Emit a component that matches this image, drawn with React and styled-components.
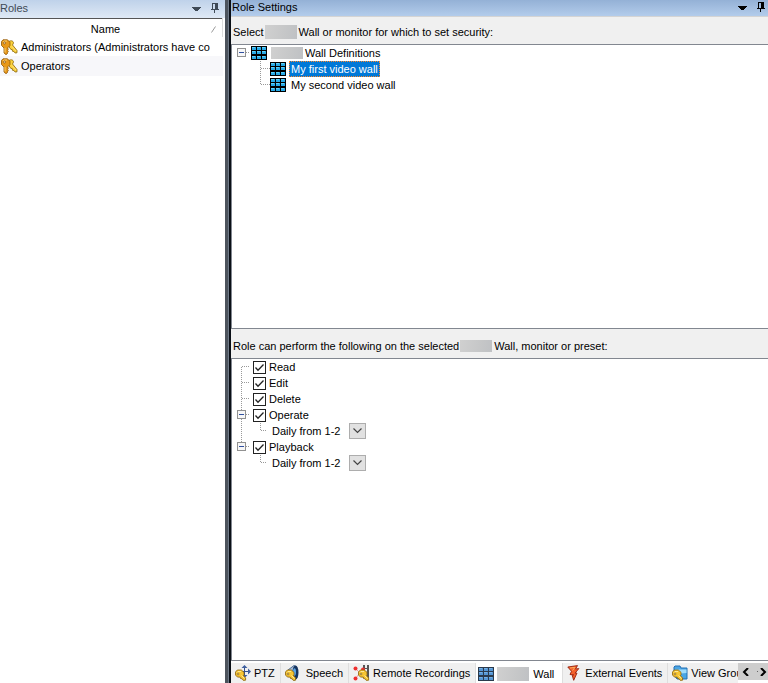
import React from 'react';
import styled, { createGlobalStyle, css } from 'styled-components';

const GlobalStyle = createGlobalStyle`
  * {
    box-sizing: border-box;
  }

  body {
    margin: 0;
    background: #f0f0f0;
    color: #000;
    font: 11px/16px 'Liberation Sans', Arial, sans-serif;
  }

  button {
    padding: 0;
    border: 0;
    background: none;
    font: inherit;
    color: inherit;
  }
`;

const Window = styled.div`
  display: flex;
  height: 100vh;
  overflow: hidden;
`;

const Splitter = styled.div`
  flex: none;
  width: 6px;
  background: linear-gradient(90deg, #4c535c 3px, #6f7a88 3px 4px, #0a0f16 4px);
`;

const RolesPane = styled.aside`
  flex: none;
  width: 225px;
  display: flex;
  flex-direction: column;
  background: #fff;
`;

const SettingsPane = styled.main`
  flex: 1;
  min-width: 0;
  display: flex;
  flex-direction: column;
`;

const TitleBar = styled.header`
  flex: none;
  display: flex;
  align-items: center;
  gap: 10px;
  height: ${({ $active }) => ($active ? 16 : 18)}px;
  padding: ${({ $active }) => ($active ? '0 3px 2px 1px' : '0 6px 3px 0')};
  color: ${({ $active }) => ($active ? '#000' : '#3f4a56')};
  background: ${({ $active }) => ($active
    ? 'linear-gradient(#94b1d6, #b3cceb)'
    : 'linear-gradient(#bfd2ea, #dfe9f5)')};
`;

const Title = styled.h1`
  flex: 1;
  margin: 0;
  font-size: 11px;
  font-weight: normal;
`;

const IconButton = styled.button`
  display: flex;
`;

const RoleTable = styled.table`
  width: 223px;
  border-top: 1px solid #555;
  border-collapse: collapse;
  table-layout: fixed;
`;

const NameHeader = styled.th`
  height: 18px;
  padding: 2px 6px 0 0;
  border-right: 1px solid #dcdcdc;
  font-weight: normal;

  div {
    display: flex;
    align-items: center;
  }

  span {
    flex: 1;
    text-align: center;
  }
`;

const RoleCell = styled.td`
  height: ${({ $odd }) => ($odd ? 20 : 19)}px;
  padding: 0;
  background: ${({ $odd }) => ($odd ? '#f7f7fa' : '#fff')};

  div {
    display: flex;
    align-items: center;
    gap: 3px;
    overflow: hidden;
    white-space: nowrap;
  }

  svg {
    flex: none;
  }
`;

const Prompt = styled.p`
  flex: none;
  display: flex;
  align-items: center;
  height: ${({ $first }) => ($first ? 28 : 29)}px;
  margin: 0;
  padding: ${({ $first }) => ($first ? 3 : 5)}px 0 0 2px;
  border-top: ${({ $first }) => ($first ? '1px solid #d4d4d4' : '0')};
  white-space: nowrap;
`;

const Redacted = styled.span`
  display: inline-block;
  flex: none;
  width: 32px;
  height: ${({ $height }) => $height || 14}px;
  margin: 0 2px 0 1px;
  background: linear-gradient(100deg, #d0d0d0, #c6c7c8 60%, #bfc1c4);
`;

const TreeBox = styled.section`
  flex: ${({ $grow }) => $grow} 1 0;
  min-height: 0;
  overflow: hidden;
  border: 1px solid #828790;
  border-right: 0;
  background: #fff;
`;

const TreeList = styled.ul`
  margin: 0;
  padding: 0 0 0 4px;
  list-style: none;
`;

const TreeRow = styled.li`
  display: flex;
  align-items: center;
  height: 16px;
  white-space: nowrap;

  > svg {
    flex: none;
  }
`;

const NodeLabel = styled.span`
  display: flex;
  align-items: center;
  height: 16px;
  margin-left: 3px;
  padding: 0 2px;

  ${({ $redacted }) => $redacted && css`
    padding: 0;
  `}

  ${({ $selected }) => $selected && css`
    padding: 0 1px;
    border: 1px dotted #ff8728;
    background: #0078d7;
    color: #fff;
  `}
`;

const CheckLabel = styled.label`
  display: flex;
  align-items: center;
  gap: 3px;
`;

const Checkbox = styled.input`
  appearance: none;
  width: 13px;
  height: 13px;
  margin: 1px 0 0;
  border: 1px solid #222;
  background: #fff;

  &:checked {
    background: #fff url("data:image/svg+xml,%3Csvg xmlns='http://www.w3.org/2000/svg' viewBox='0 0 11 11'%3E%3Cpath d='M1.5 5.5l2.5 2.7 5.5-5.7' fill='none' stroke='%23222' stroke-width='1.3'/%3E%3C/svg%3E");
  }
`;

const TimeButton = styled.button`
  display: flex;
  align-items: center;
  justify-content: center;
  width: 17px;
  height: 16px;
  margin-left: 7px;
  border: 1px solid #adadad;
  background: #e1e1e1;
`;

const TabBar = styled.nav`
  flex: none;
  display: flex;
  height: 22px;
  padding-top: 2px;
  background: #fff;
`;

const TabStrip = styled.div`
  flex: 1;
  min-width: 0;
  display: flex;
  overflow: hidden;
`;

const Tab = styled.button`
  flex: none;
  display: flex;
  align-items: center;
  gap: ${({ $gap }) => $gap || 3}px;
  padding: ${({ $active }) => ($active ? '2px 8px 0 2px' : '0 5px 0 4px')};
  border-right: 1px solid #dedede;
  background: ${({ $active }) => ($active ? '#fff' : '#f0f0f0')};
  white-space: nowrap;
`;

const Scroller = styled.div`
  flex: none;
  display: flex;
  align-items: center;
  justify-content: space-between;
  width: 30px;
  height: 17px;
  padding: 1px 1px 0 4px;
  background: #cdcdcd;
`;

const Arrow = () => (
  <svg width="9" height="6" viewBox="0 -2 9 6" shapeRendering="crispEdges">
    <path d="M0 0h9v1h-1v1h-1v1h-1v1H3V3H2V2H1V1H0z" fill="currentColor" />
  </svg>
);

const Pin = () => (
  <svg width="8" height="10" viewBox="0 0 8 10" shapeRendering="crispEdges">
    <path d="M1 0h6v6h1v1H4v3H3V7H0V6h1zM2 1v5h2V1z" fill="currentColor" fillRule="evenodd" />
  </svg>
);

const KeysIcon = () => (
  <svg width="18" height="16" viewBox="-1 0 18 16">
    <g strokeWidth=".8" strokeLinejoin="round">
      <path d="M8 2.500c2-1.500 4.500-.5 4.500 1.500L11.500 6l4.500 5.500v2.300l-2 .2-1-1.500-1.500-.2-.2-1.600-1.500-.3L7.500 7z" fill="#fbd23c" stroke="#8a6508" />
      <path d="M2 .8h4.500L9 3.500v3L7 8.700 6.500 9l.8 1.200-.8 1.100.8 1.200-.8 1.200v.8L5 15.700 3 14V9L.5 6.500v-4z" fill="#e8981a" stroke="#8f5605" />
      <path d="M2 3l1.500-1H6M4 9v4.500M11 7.500l4 4.500" fill="none" stroke="#ffe08a" />
      <circle cx="3.500" cy="4" r="1" fill="#fff" stroke="#8f5605" />
    </g>
  </svg>
);

const SmallKey = () => (
  <g stroke="#8a5f08" strokeWidth=".8" strokeLinejoin="round">
    <path d="M2.300 5h4L9 7.300v2.500l-.6 1 2.200 2v2.400l-2.300.2-1.200-1.600-1.600-.3-.3-1.400H2.500L.5 10V7z" fill="#f6c533" />
    <path d="M2 7.500l1-1h3M6.500 10.500l3 3" fill="none" stroke="#fff0b0" />
    <circle cx="3" cy="9" r=".9" fill="#fff" />
  </g>
);

const GridIcon = ({ muted }) => (
  <svg width="16" height="14" viewBox="0 0 16 14" shapeRendering="crispEdges">
    <rect width="16" height="14" fill={muted ? '#2b3a4c' : '#000'} />
    {[1, 5, 10].map((y) => [1, 6, 11].map((x) => (
      <g key={`${x}-${y}`}>
        <rect x={x} y={y} width="4" height="3" fill={muted ? '#5596d4' : '#27a9e6'} />
        <rect x={x} y={y} width="3" height="1" fill={muted ? '#76b1e6' : '#5fd0fa'} />
      </g>
    )))}
  </svg>
);

const PtzIcon = () => (
  <svg width="16" height="16" viewBox="0 0 16 16">
    <path d="M9.500 1v12M4 6.500h11" fill="none" stroke="#31508f" />
    <path d="M9.500 0l3 3h-6zM9.500 13l3-3h-6zM16 6.500l-3-3v6z" fill="#3e5f9f" />
    <SmallKey />
  </svg>
);

const SpeechIcon = () => (
  <svg width="16" height="16" viewBox="0 0 16 16">
    <path d="M3 5l6-4.500c4-.5 5 14.500 0 14.500L4 11z" fill="#a9bdd5" stroke="#4c6c94" />
    <ellipse cx="10.500" cy="7.500" rx="3" ry="7" fill="#15335f" />
    <ellipse cx="9.500" cy="7" rx="1.500" ry="3.800" fill="#5ba7e8" />
    <SmallKey />
  </svg>
);

const RecordingsIcon = () => (
  <svg width="17" height="16" viewBox="0 0 17 16">
    <path d="M10 0h6v13h-6z" fill="#555" />
    <path d="M12 0h2v3h-2zM12 4h2v4h-2zM12 9h2v3h-2z" fill="#eee" />
    <path d="M2 3l5 5-5 6" fill="none" stroke="#f09a9a" />
    <g fill="#ee3030">
      <circle cx="2.500" cy="3.500" r="2" />
      <circle cx="2.500" cy="13.500" r="2" />
      <circle cx="10" cy="4.500" r="2" />
    </g>
    <g transform="translate(5)"><SmallKey /></g>
  </svg>
);

const BoltIcon = () => (
  <svg width="13" height="16" viewBox="0 0 13 16">
    <path d="M.8 2L10.500.600 8.500 4l3.300-.4L8 8.200l2-.2-3.300 7.300-1.500-5 1.500-.4-3.700-.4 1.500-3.200z" fill="#f4602c" stroke="#961f0c" strokeWidth=".9" />
    <path d="M3 3l5-.7-2.500 3.300" fill="none" stroke="#ffad5a" />
  </svg>
);

const ViewIcon = () => (
  <svg width="16" height="16" viewBox="0 0 16 16">
    <path d="M2 2l1-1h5l1 2h6v11H5L2 10z" fill="#4aa5e4" stroke="#2271b5" />
    <path d="M3 4.500h11.500V8L3 9z" fill="#9fdcfb" />
    <SmallKey />
  </svg>
);

// Expander and dotted connector to the left of a tree node
const Branch = ({ expander, last, first, width = 17 }) => (
  <svg width={width} height="16" viewBox={`0 0 ${width} 16`} shapeRendering="crispEdges">
    {!first && <path d="M5.500 0v8" stroke="#999" strokeDasharray="1 1" />}
    {!last && <path d="M5.500 8v8" stroke="#999" strokeDasharray="1 1" />}
    <path d="M6 7.500h8" stroke="#999" strokeDasharray="1 1" />
    {expander && (
      <>
        <rect x="1.500" y="3.500" width="8" height="8" rx="1" fill="#f7f7f7" stroke="#919191" />
        <path d="M3 7.500h5" stroke="#3050a0" />
      </>
    )}
  </svg>
);

const ChildBranch = ({ last, through, width = 34 }) => (
  <svg width={width} height="16" viewBox={`0 0 ${width} 16`} shapeRendering="crispEdges">
    {through && <path d="M5.500 0v16" stroke="#999" strokeDasharray="1 1" />}
    <path d={last ? 'M24.500 0v8' : 'M24.500 0v16'} stroke="#999" strokeDasharray="1 1" />
    <path d="M25 7.500h9" stroke="#999" strokeDasharray="1 1" />
  </svg>
);

const TimeRow = ({ through }) => (
  <TreeRow>
    <ChildBranch last through={through} width={31} />
    <NodeLabel>Daily from 1-2</NodeLabel>
    <TimeButton aria-label="Choose time profile">
      <svg width="9" height="6" viewBox="0 0 9 6">
        <path d="M.5.500l4 4 4-4" fill="none" stroke="#444" strokeWidth="1.200" />
      </svg>
    </TimeButton>
  </TreeRow>
);

const PermissionRow = ({ label, ...branch }) => (
  <TreeRow>
    <Branch {...branch} />
    <CheckLabel>
      <Checkbox type="checkbox" defaultChecked />
      {label}
    </CheckLabel>
  </TreeRow>
);

const roles = ['Administrators (Administrators have co', 'Operators'];

const App = () => (
  <>
    <GlobalStyle />
    <Window>
      <RolesPane>
        <TitleBar>
          <Title>Roles</Title>
          <IconButton aria-label="Roles menu"><Arrow /></IconButton>
          <IconButton aria-label="Pin roles"><Pin /></IconButton>
        </TitleBar>
        <RoleTable>
          <thead>
            <tr>
              <NameHeader>
                <div>
                  <span>Name</span>
                  <svg width="5" height="7" viewBox="0 0 5 7"><path d="M.5 6.500l4-6" stroke="#999" /></svg>
                </div>
              </NameHeader>
            </tr>
          </thead>
          <tbody>
            {roles.map((role, i) => (
              <tr key={role}>
                <RoleCell $odd={i % 2 === 1}>
                  <div>
                    <KeysIcon />
                    {role}
                  </div>
                </RoleCell>
              </tr>
            ))}
          </tbody>
        </RoleTable>
      </RolesPane>

      <Splitter />

      <SettingsPane>
        <TitleBar $active>
          <Title>Role Settings</Title>
          <IconButton aria-label="Role settings menu"><Arrow /></IconButton>
          <IconButton aria-label="Pin role settings"><Pin /></IconButton>
        </TitleBar>

        <Prompt $first>
          Select
          <Redacted />
          Wall or monitor for which to set security:
        </Prompt>
        <TreeBox $grow={285}>
          <TreeList>
            <TreeRow>
              <Branch expander first last width={15} />
              <GridIcon />
              <NodeLabel $redacted>
                <Redacted $height={12} />
                Wall Definitions
              </NodeLabel>
            </TreeRow>
            <TreeRow>
              <ChildBranch />
              <GridIcon />
              <NodeLabel $selected>My first video wall</NodeLabel>
            </TreeRow>
            <TreeRow>
              <ChildBranch last />
              <GridIcon />
              <NodeLabel>My second video wall</NodeLabel>
            </TreeRow>
          </TreeList>
        </TreeBox>

        <Prompt>
          Role can perform the following on the selected
          <Redacted $height={12} />
          Wall, monitor or preset:
        </Prompt>
        <TreeBox $grow={303}>
          <TreeList>
            <PermissionRow label="Read" first />
            <PermissionRow label="Edit" />
            <PermissionRow label="Delete" />
            <PermissionRow label="Operate" expander />
            <TimeRow through />
            <PermissionRow label="Playback" expander last />
            <TimeRow />
          </TreeList>
        </TreeBox>

        <TabBar>
          <TabStrip>
            <Tab><PtzIcon />PTZ</Tab>
            <Tab $gap={5}><SpeechIcon />Speech</Tab>
            <Tab><RecordingsIcon />Remote Recordings</Tab>
            <Tab $active $gap={2}>
              <GridIcon muted />
              <Redacted />
              Wall
            </Tab>
            <Tab $gap={5}><BoltIcon />External Events</Tab>
            <Tab><ViewIcon />View Groups</Tab>
          </TabStrip>
          <Scroller>
            <IconButton aria-label="Previous tabs">
              <svg width="7" height="8" viewBox="0 0 7 8"><path d="M6 0L2 4l4 4" fill="none" stroke="#000" strokeWidth="2" /></svg>
            </IconButton>
            <IconButton aria-label="Next tabs">
              <svg width="10" height="8" viewBox="-3 0 10 8">
                <path d="M-3 3.500h1" stroke="#666" />
                <path d="M1 0l4 4-4 4" fill="none" stroke="#000" strokeWidth="2" />
              </svg>
            </IconButton>
          </Scroller>
        </TabBar>
      </SettingsPane>
    </Window>
  </>
);

export default App;
